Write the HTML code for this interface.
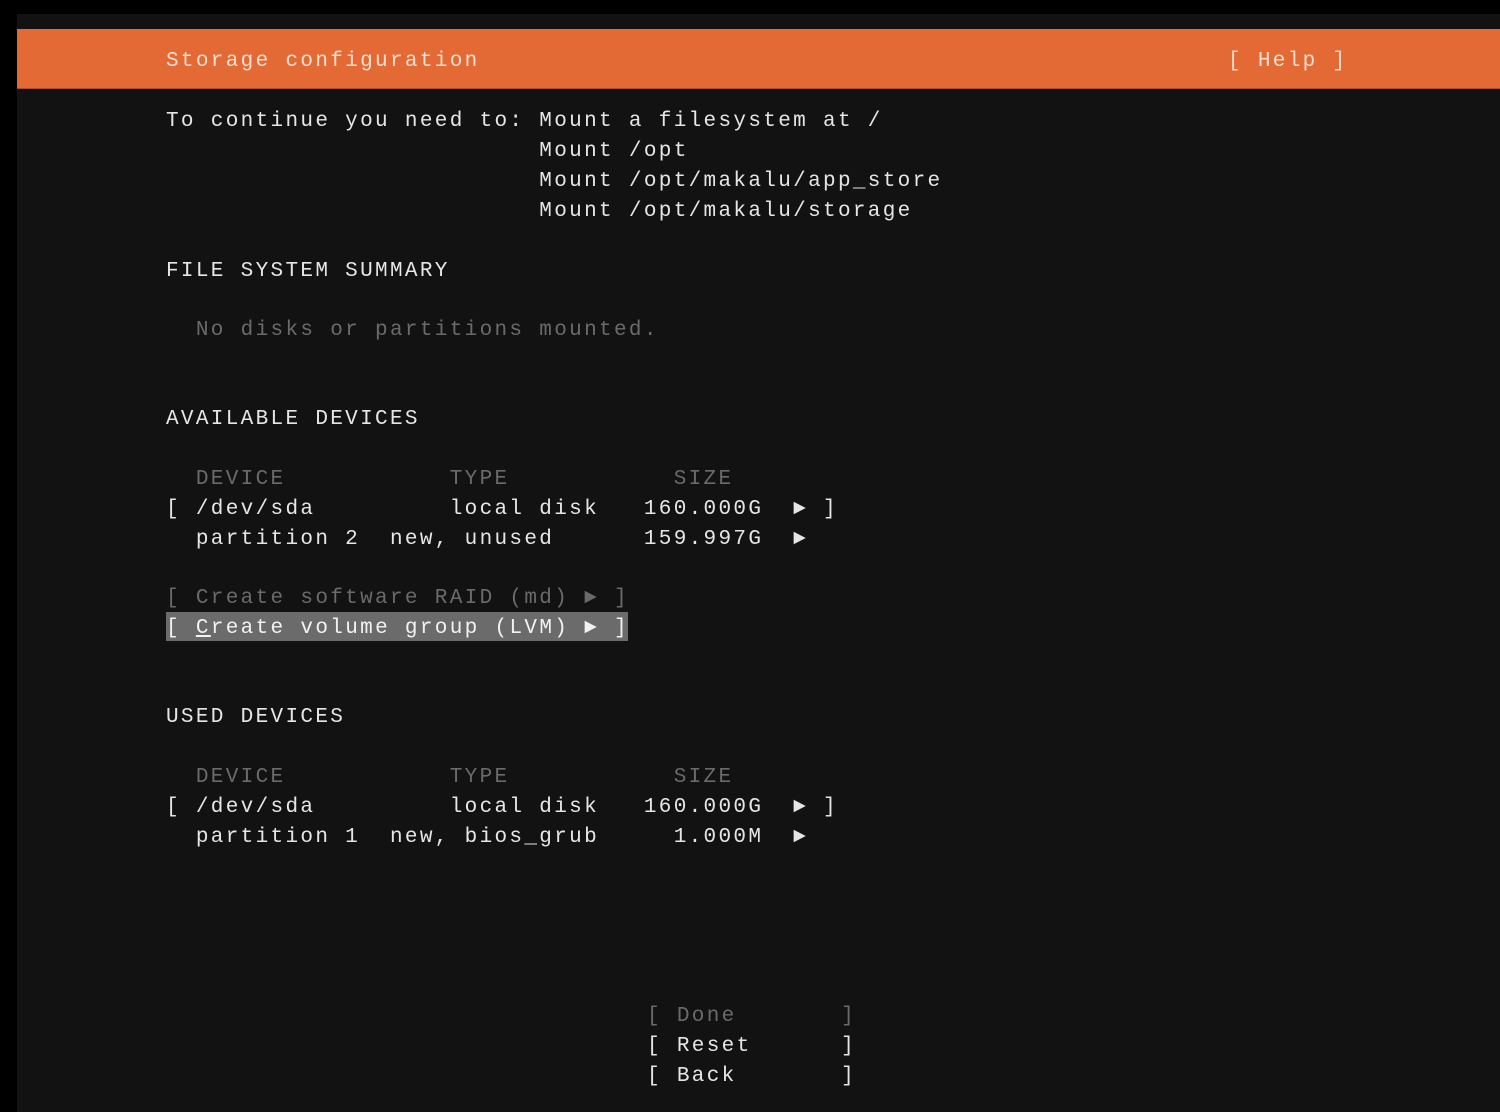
<!DOCTYPE html>
<html><head><meta charset="utf-8"><style>
html,body{margin:0;padding:0;width:1500px;height:1112px;background:#000;overflow:hidden}
#scr{position:absolute;left:17px;top:14px;width:1483px;height:1098px;background:#121212}
#bar{position:absolute;left:17px;top:29px;width:1483px;height:59px;background:#e36935;border-bottom:1px solid #b04f25}
.l{position:absolute;left:166px;height:30px;line-height:30px;font-family:"Liberation Mono","DejaVu Sans Mono",monospace;font-size:21px;letter-spacing:2.33px;color:#e6e6e6;white-space:pre;margin:0}
.d{color:#6a6a6a}
.o{color:#fbe0d2}
#hl{position:absolute;left:166px;top:612px;width:462px;height:29px;background:#6b6b6b}
.u{text-decoration:underline}
</style></head><body>
<div id="scr"></div>
<div id="bar"></div>
<pre class="l o" style="top:47px">Storage configuration</pre>
<pre class="l o" style="top:47px;left:1228px">[ Help ]</pre>
<pre class="l" style="top:107px">To continue you need to: Mount a filesystem at /</pre>
<pre class="l" style="top:137px">                         Mount /opt</pre>
<pre class="l" style="top:167px">                         Mount /opt/makalu/app_store</pre>
<pre class="l" style="top:197px">                         Mount /opt/makalu/storage</pre>
<pre class="l" style="top:257px">FILE SYSTEM SUMMARY</pre>
<pre class="l d" style="top:316px">  No disks or partitions mounted.</pre>
<pre class="l" style="top:405px">AVAILABLE DEVICES</pre>
<pre class="l d" style="top:465px">  DEVICE           TYPE           SIZE</pre>
<pre class="l" style="top:495px">[ /dev/sda         local disk   160.000G  ► ]</pre>
<pre class="l" style="top:525px">  partition 2  new, unused      159.997G  ►</pre>
<pre class="l d" style="top:584px">[ Create software RAID (md) ► ]</pre>
<div id="hl"></div>
<pre class="l" style="top:614px;color:#f2f2f2">[ <span class="u">C</span>reate volume group (LVM) ► ]</pre>
<pre class="l" style="top:703px">USED DEVICES</pre>
<pre class="l d" style="top:763px">  DEVICE           TYPE           SIZE</pre>
<pre class="l" style="top:793px">[ /dev/sda         local disk   160.000G  ► ]</pre>
<pre class="l" style="top:823px">  partition 1  new, bios_grub     1.000M  ►</pre>
<pre class="l d" style="top:1002px;left:647px">[ Done       ]</pre>
<pre class="l" style="top:1032px;left:647px">[ Reset      ]</pre>
<pre class="l" style="top:1062px;left:647px">[ Back       ]</pre>
</body></html>
